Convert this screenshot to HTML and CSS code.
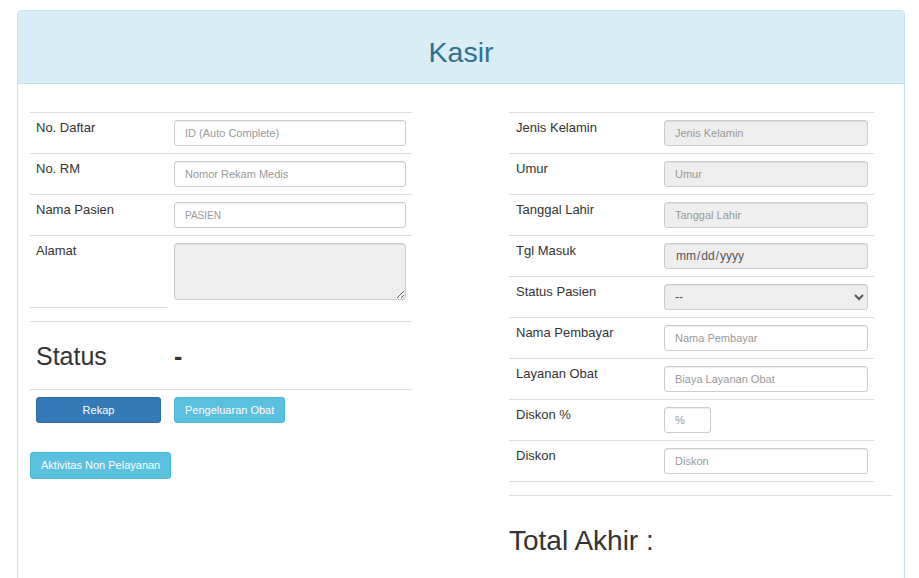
FILE: index.html
```html
<!DOCTYPE html>
<html>
  <head lang="id">
    <meta charset="UTF-8" />
    <title>Kasir</title>
    <link rel="stylesheet" href="styles.css">
  </head>

  <body>
    <div class="panel">
      <div class="panel-heading">
        <h3 class="panel-title">Kasir</h3>
      </div>
      <div class="panel-body">
        <div class="col col-left">
          <table class="form-table left-table">
            <tr>
              <td class="label">No. Daftar</td>
              <td class="input-cell"><input type="text" class="field" placeholder="ID (Auto Complete)" /></td>
            </tr>
            <tr>
              <td class="label">No. RM</td>
              <td class="input-cell"><input type="text" class="field" placeholder="Nomor Rekam Medis" /></td>
            </tr>
            <tr>
              <td class="label">Nama Pasien</td>
              <td class="input-cell"><input type="text" class="field small-ph" placeholder="PASIEN" /></td>
            </tr>
            <tr>
              <td class="label alamat-label">Alamat</td>
              <td class="input-cell"><textarea class="field area" readonly></textarea></td>
            </tr>
          </table>

          <table class="form-table status-table">
            <tr>
              <td class="label status-label">Status</td>
              <td class="status-value">-</td>
            </tr>
            <tr>
              <td class="btn-cell"><button class="btn btn-primary btn-block">Rekap</button></td>
              <td class="btn-cell btn-cell-right"><button class="btn btn-info">Pengeluaran Obat</button></td>
            </tr>
          </table>

          <button class="btn btn-info btn-aktivitas">Aktivitas Non Pelayanan</button>
        </div>

        <div class="col col-right">
          <table class="form-table right-table">
            <tr>
              <td class="label">Jenis Kelamin</td>
              <td class="input-cell"><input type="text" class="field" placeholder="Jenis Kelamin" readonly /></td>
            </tr>
            <tr>
              <td class="label">Umur</td>
              <td class="input-cell"><input type="text" class="field" placeholder="Umur" readonly /></td>
            </tr>
            <tr>
              <td class="label">Tanggal Lahir</td>
              <td class="input-cell"><input type="text" class="field" placeholder="Tanggal Lahir" readonly /></td>
            </tr>
            <tr>
              <td class="label">Tgl Masuk</td>
              <td class="input-cell"><input type="date" class="field date-field" readonly /></td>
            </tr>
            <tr>
              <td class="label">Status Pasien</td>
              <td class="input-cell">
                <select class="field select-field">
                  <option>--</option>
                </select>
              </td>
            </tr>
            <tr>
              <td class="label">Nama Pembayar</td>
              <td class="input-cell"><input type="text" class="field white" placeholder="Nama Pembayar" /></td>
            </tr>
            <tr>
              <td class="label">Layanan Obat</td>
              <td class="input-cell"><input type="text" class="field white" placeholder="Biaya Layanan Obat" /></td>
            </tr>
            <tr>
              <td class="label">Diskon %</td>
              <td class="input-cell"><input type="text" class="field white diskon-persen" placeholder="%" /></td>
            </tr>
            <tr class="last-row">
              <td class="label">Diskon</td>
              <td class="input-cell"><input type="text" class="field white" placeholder="Diskon" /></td>
            </tr>
          </table>
          <hr class="divider" />
          <h2 class="total">Total Akhir :</h2>
        </div>
      </div>
    </div>
  </body>
</html>
```

FILE: styles.css
```css
body {
  margin: 0;
  font-family: "Liberation Sans", Arial, sans-serif;
  color: #333333;
  background: #ffffff;
}

.panel {
  width: 886px;
  margin: 10px 0 0 17px;
  border: 1px solid #bce8f1;
  border-radius: 4px;
  background: #ffffff;
}

.panel-heading {
  background: #d9edf7;
  border-bottom: 1px solid #bce8f1;
  border-radius: 3px 3px 0 0;
  padding: 25px 15px 15px 15px;
}

.panel-title {
  margin: 0;
  text-align: center;
  font-size: 28.5px;
  font-weight: normal;
  line-height: 32px;
  color: #31708f;
}

.panel-body {
  display: flex;
  justify-content: space-between;
  padding: 28px 12px 0 12px;
  min-height: 520px;
}

.col-left {
  width: 382px;
}

.col-right {
  width: 383px;
}

.form-table {
  border-collapse: collapse;
  table-layout: fixed;
}

.form-table td {
  border-top: 1px solid #dddddd;
  padding: 7px 6px;
  vertical-align: top;
}

.left-table,
.status-table {
  width: 382px;
}

.left-table td.label,
.status-table td.label,
.status-table td.btn-cell {
  width: 125px;
}

.right-table {
  width: 365px;
}

.right-table td.label {
  width: 135px;
  padding-left: 7px;
}

.form-table td.input-cell {
  padding-left: 7px;
}

.label {
  font-size: 13px;
  line-height: 15px;
  color: #333333;
}

.alamat-label {
  border-bottom: 1px solid #dddddd;
}

.last-row td {
  border-bottom: 1px solid #dddddd;
}

.field {
  display: block;
  box-sizing: border-box;
  width: 100%;
  height: 26px;
  margin: 0;
  padding: 0 10px;
  border: 1px solid #cccccc;
  border-radius: 3px;
  background: #eeeeee;
  font-family: "Liberation Sans", Arial, sans-serif;
  font-size: 11px;
  color: #555555;
  box-shadow: inset 0 1px 1px rgba(0, 0, 0, 0.075);
  outline: none;
}

.left-table .field,
.field.white {
  background: #ffffff;
}

.left-table .field.area {
  height: 57px;
  background: #eeeeee;
  resize: vertical;
}

.field::placeholder {
  color: #999999;
}

.small-ph::placeholder {
  font-size: 10px;
}

.date-field {
  font-size: 12px;
  color: #555555;
}

.date-field::-webkit-calendar-picker-indicator {
  display: none;
}

.select-field {
  height: 26px;
  font-size: 12px;
  padding: 0 6px;
}

.diskon-persen {
  width: 47px;
}

.status-table {
  margin-top: 13px;
}

.status-table td.status-label {
  font-size: 25px;
  line-height: 29px;
  padding: 20px 6px 18px 6px;
}

.status-table td.status-value {
  font-size: 25px;
  font-weight: bold;
  line-height: 29px;
  padding: 20px 6px 18px 7px;
}

.status-table td.btn-cell {
  padding: 7px 6px 7px 6px;
}

.status-table td.btn-cell-right {
  padding-left: 7px;
}

.btn {
  display: inline-block;
  box-sizing: border-box;
  height: 26px;
  padding: 0 10px;
  border: 1px solid transparent;
  border-radius: 3px;
  font-family: "Liberation Sans", Arial, sans-serif;
  font-size: 11px;
  color: #ffffff;
  cursor: pointer;
}

.btn-block {
  display: block;
  width: 100%;
}

.btn-primary {
  background: #337ab7;
  border-color: #2e6da4;
}

.btn-info {
  background: #5bc0de;
  border-color: #46b8da;
}

.btn-aktivitas {
  height: 27px;
  margin-top: 22px;
}

.divider {
  margin: 13px 0 0 0;
  border: 0;
  border-top: 1px solid #dddddd;
}

.total {
  margin: 29px 0 0 0;
  font-size: 28px;
  font-weight: normal;
  line-height: 32px;
  color: #333333;
}
```
